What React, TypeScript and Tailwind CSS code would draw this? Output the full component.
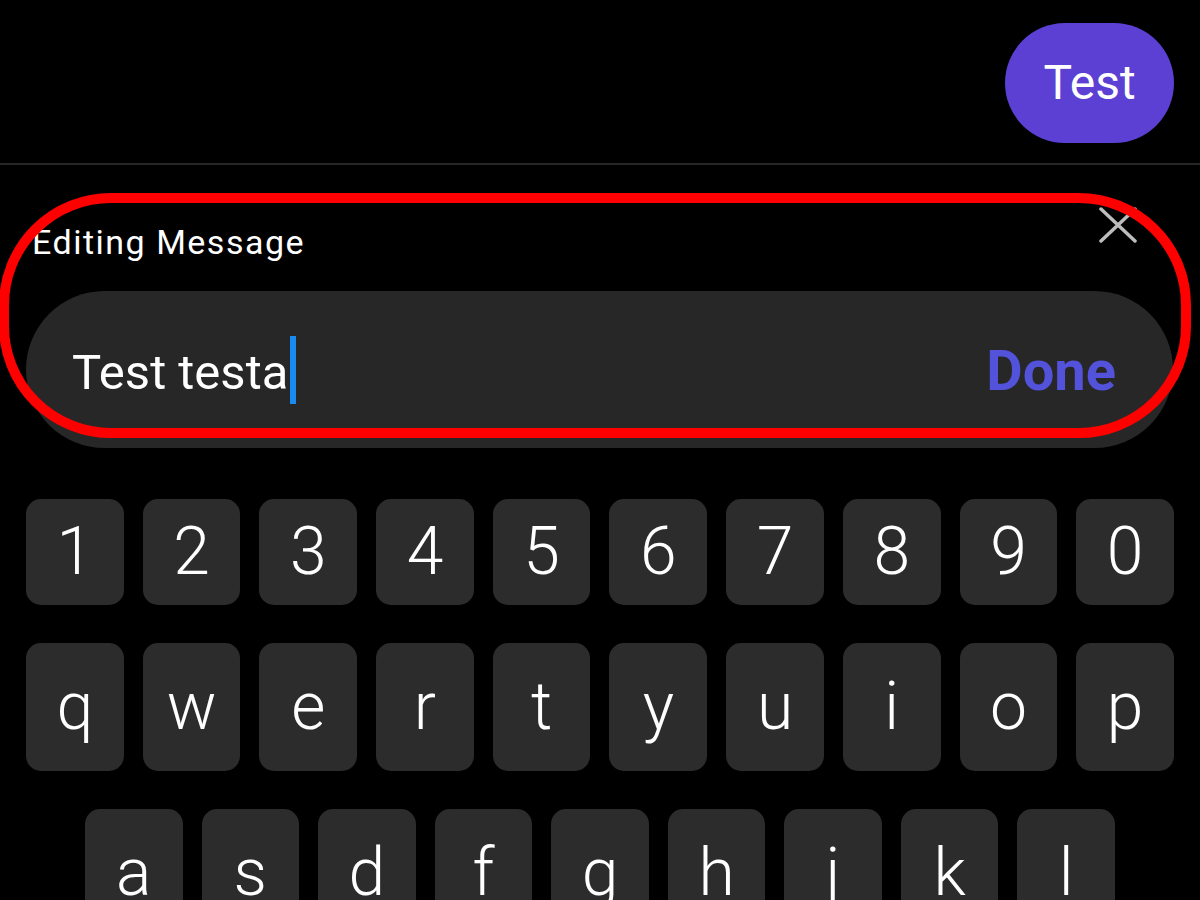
import React from 'react';

const numberRow = ['1', '2', '3', '4', '5', '6', '7', '8', '9', '0'];
const topRow = ['q', 'w', 'e', 'r', 't', 'y', 'u', 'i', 'o', 'p'];
const homeRow = ['a', 's', 'd', 'f', 'g', 'h', 'j', 'k', 'l'];

const Key = ({ label }: { label: string }) => (
  <div className="flex items-center justify-center rounded-[15px] bg-[#2c2c2c] text-white text-[66px] leading-none font-light">
    {label}
  </div>
);

export default function App() {
  return (
    <div className="relative w-[1200px] h-[900px] overflow-hidden bg-black font-['Roboto','Liberation_Sans',sans-serif]">
      {/* Sent message */}
      <div className="h-[163px] flex justify-end items-start pt-[23px] pr-[26px]">
        <div className="w-[169px] h-[120px] rounded-full bg-[#5b40d3] flex items-center justify-center text-white text-[48px] leading-none">
          Test
        </div>
      </div>
      <div className="h-[2px] bg-[#262626]" />

      {/* Edit bar */}
      <section className="px-[26px] pt-[42px]">
        <div className="flex items-start justify-between">
          <span className="mt-[18px] ml-[6px] text-white text-[34px] tracking-[1.5px] leading-none">Editing Message</span>
          <svg width="40" height="36" viewBox="0 0 40 36" className="mr-[36px]">
            <path d="M3 2 L37 34 M37 2 L3 34" stroke="#bdbdbd" strokeWidth="3.5" strokeLinecap="round" />
          </svg>
        </div>
        <div className="mt-[32px] h-[157px] w-[1147px] rounded-full bg-[#272727] flex items-center justify-between pl-[46px] pr-[57px]">
          <div className="flex items-center">
            <span className="pt-[5px] text-white text-[49px] leading-none">Test testa</span>
            <span className="ml-[2px] w-[6px] h-[68px] bg-[#1a8cf0]" />
          </div>
          <span className="pt-[3px] text-[#5352da] text-[56px] font-bold leading-none">Done</span>
        </div>
      </section>

      {/* Annotation outline */}
      <div className="absolute left-[-1px] top-[193px] w-[1192px] h-[245px] rounded-[112px] border-[10px] border-[#ff0000]" />

      {/* Keyboard */}
      <div className="mt-[51px] px-[26px] flex flex-col gap-[38px]">
        <div className="grid grid-cols-10 gap-[19px] h-[106px]">
          {numberRow.map((k) => (
            <Key key={k} label={k} />
          ))}
        </div>
        <div className="grid grid-cols-10 gap-[19px] h-[128px]">
          {topRow.map((k) => (
            <Key key={k} label={k} />
          ))}
        </div>
        <div className="grid grid-cols-9 gap-[19px] h-[128px] mx-[59px]">
          {homeRow.map((k) => (
            <Key key={k} label={k} />
          ))}
        </div>
      </div>
    </div>
  );
}
